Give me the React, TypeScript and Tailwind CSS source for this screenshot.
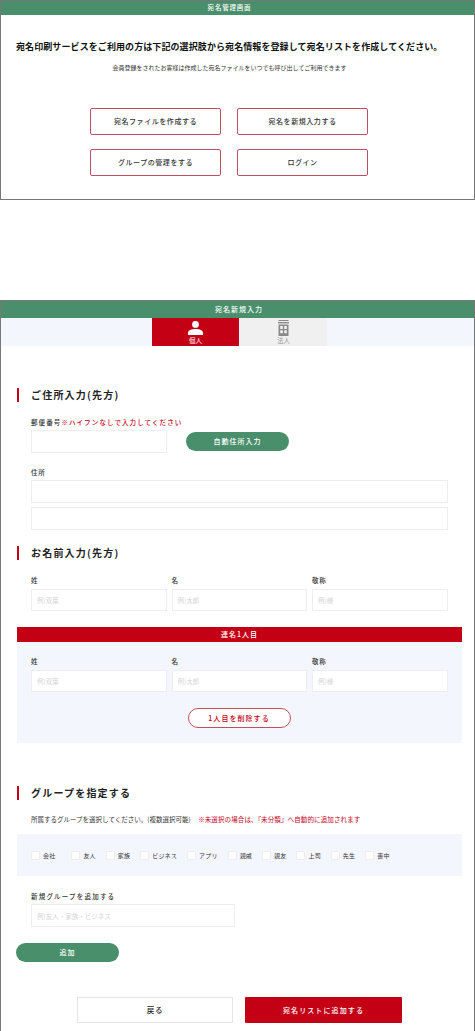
const font = "[font-family:'Noto_Sans_CJK_JP','Noto_Sans',sans-serif]"

function SectionTitle({ title, className }: { title: string; className: string }) {
  return (
    <div className={`flex h-[14px] items-center border-l-[2px] border-[#c4001a] pl-3 text-[10px] font-bold leading-none tracking-[0.12em] text-[#222] ${className}`}>
      {title}
    </div>
  )
}

function Field({ label, placeholder }: { label: string; placeholder: string }) {
  return (
    <div className="w-[135.5px]">
      <div className="text-[6.5px] font-medium leading-[9px] tracking-[0.8px] text-[#333]">{label}</div>
      <input
        placeholder={placeholder}
        className="mt-[4px] block h-[22px] w-full border border-[#eee] bg-white px-[5px] text-[6.5px] outline-none placeholder:text-[#d5d5d5]"
      />
    </div>
  )
}

function NameRow() {
  return (
    <div className="flex gap-[5px]">
      <Field label="姓" placeholder="例)双葉" />
      <Field label="名" placeholder="例)太郎" />
      <Field label="敬称" placeholder="例)様" />
    </div>
  )
}

function MenuButton({ label }: { label: string }) {
  return (
    <button className="flex h-[27px] w-[131px] items-center justify-center rounded-[2px] border border-[#c0505f] bg-white text-[7px] font-medium tracking-[0.08em] text-[#333]">
      {label}
    </button>
  )
}

const groups = ['会社', '友人', '家族', 'ビジネス', 'アプリ', '親戚', '親友', '上司', '先生', '喪中']

export default function App() {
  return (
    <div className={`${font} w-[475px] bg-white`}>
      {/* 宛名管理画面 */}
      <div className="h-[200px] border border-[#777]">
        <div className="flex h-[14px] items-center justify-center bg-[#4a8f6b] pr-[16px] text-[6.5px] font-medium tracking-[0.8px] text-white">
          宛名管理画面
        </div>
        <div className="mt-[25px] whitespace-nowrap pl-[15px] text-[9px] font-bold leading-[13px] tracking-[0.01em] text-[#111]">
          宛名印刷サービスをご利用の方は下記の選択肢から宛名情報を登録して宛名リストを作成してください。
        </div>
        <div className="mt-[10px] pr-[16px] text-center text-[6px] leading-[9px] text-[#333]">
          会員登録をされたお客様は作成した宛名ファイルをいつでも呼び出してご利用できます
        </div>
        <div className="ml-[89px] mt-[36px] grid w-[278px] grid-cols-[131px_131px] gap-x-[16px] gap-y-[14px]">
          <MenuButton label="宛名ファイルを作成する" />
          <MenuButton label="宛名を新規入力する" />
          <MenuButton label="グループの管理をする" />
          <MenuButton label="ログイン" />
        </div>
      </div>

      {/* 宛名新規入力 */}
      <div className="mt-[100px] h-[731px] border-x border-t border-[#777]">
        <div className="flex h-[17px] items-center justify-center bg-[#4a8f6b] pl-[3px] text-[7px] font-medium tracking-[1px] text-white">
          宛名新規入力
        </div>
        <div className="flex h-[28px] justify-center gap-px bg-[#f3f6fc] pl-[4px]">
          <div className="flex w-[87px] flex-col items-center bg-[#c40015] pt-[3px] text-white">
            <svg viewBox="0 0 15 14" className="h-[14px] w-[15px]" fill="currentColor">
              <circle cx="7.5" cy="3.4" r="3.4" />
              <path d="M0 14v-2.2C0 9.4 3.4 8 7.5 8s7.5 1.4 7.5 3.8V14z" />
            </svg>
            <span className="mt-[2px] text-[6.5px] leading-[7px]">個人</span>
          </div>
          <div className="flex w-[87px] flex-col items-center bg-[#f0f0f0] pt-[2px] text-[#8a8a8a]">
            <svg viewBox="0 0 11 16" className="h-[16px] w-[11px]" fill="currentColor">
              <rect x="0.5" y="0" width="10" height="1" />
              <rect x="0" y="2" width="11" height="1.4" />
              <path d="M0.5 4.4h10V16h-10zM2.2 6v3h2.6V6zm4 0v3h2.6V6zM2.2 10.2v3h2.6v-3zm4 0v3h2.6v-3z" />
            </svg>
            <span className="mt-[1px] text-[6.5px] leading-[7px] text-[#999]">法人</span>
          </div>
        </div>

        <div className="pl-[16px] pr-[12px]">
          <SectionTitle title="ご住所入力(先方)" className="mt-[42px]" />
          <div className="pl-[14px]">
            <div className="mt-[16px] text-[6.5px] font-medium leading-[9px] tracking-[1.1px] text-[#333]">
              郵便番号<span className="text-[#c4001a]">※ハイフンなしで入力してください</span>
            </div>
            <div className="mt-[3px] flex items-center gap-[19.5px]">
              <input className="h-[22.5px] w-[135.5px] border border-[#eee] bg-white" />
              <button className="h-[19px] w-[103px] rounded-full bg-[#4a8f6b] text-[7px] font-medium tracking-[1px] text-white">
                自動住所入力
              </button>
            </div>
            <div className="mt-[15.5px] text-[6.5px] font-medium leading-[9px] tracking-[0.8px] text-[#333]">住所</div>
            <input className="mt-[3px] block h-[22.5px] w-[416.5px] border border-[#eee] bg-white" />
            <input className="mt-[4.5px] block h-[22.5px] w-[416.5px] border border-[#eee] bg-white" />
          </div>

          <SectionTitle title="お名前入力(先方)" className="mt-[16.5px]" />
          <div className="mt-[16px] pl-[14px]">
            <NameRow />
          </div>

          <div className="mt-[16px] w-[445px] bg-[#f3f6fc]">
            <div className="flex h-[15px] items-center justify-center bg-[#c40015] text-[7px] font-medium tracking-[1px] text-white">
              連名1人目
            </div>
            <div className="px-[14px] pt-[15px]">
              <NameRow />
            </div>
            <div className="flex h-[51px] justify-center pt-[16px] pr-[1px]">
              <button className="h-[20px] w-[103px] rounded-full border border-[#c0505f] bg-white text-[7px] font-medium tracking-[0.15em] text-[#c4001a]">
                1人目を削除する
              </button>
            </div>
          </div>

          <SectionTitle title="グループを指定する" className="mt-[43px]" />
          <div className="mt-[15px] flex gap-[7.5px] whitespace-nowrap pl-[14px] text-[6.5px] leading-[9px]">
            <span className="text-[#333]">所属するグループを選択してください。(複数選択可能)</span>
            <span className="tracking-[0.12px] text-[#c4001a]">※未選択の場合は、『未分類』へ自動的に追加されます</span>
          </div>
          <div className="mt-[10px] flex h-[42px] w-[445px] items-center gap-[10px] bg-[#f3f6fc] pl-[14px]">
            {groups.map((g, i) => (
              <div key={g} className={`flex items-center gap-[3px] ${i === 0 ? 'mr-[6px]' : ''}`}>
                <span className="h-[9px] w-[9px] rounded-[1px] border border-[#eee] bg-white" />
                <span className="text-[6px] leading-[9px] tracking-[0.2px] text-[#333]">{g}</span>
              </div>
            ))}
          </div>
          <div className="pl-[14px]">
            <div className="mt-[16px] text-[6.5px] font-medium leading-[9px] tracking-[1.2px] text-[#333]">新規グループを追加する</div>
            <input
              placeholder="例)友人・家族・ビジネス"
              className="mt-[3px] block h-[23px] w-[204px] border border-[#eee] bg-white px-[5px] text-[6.5px] outline-none placeholder:text-[#d5d5d5]"
            />
          </div>
          <button className="-ml-[1px] mt-[16px] block h-[19px] w-[103px] rounded-full bg-[#4a8f6b] text-[7px] font-medium tracking-[1px] text-white">
            追加
          </button>
          <div className="ml-[60px] mt-[35px] flex gap-[12px]">
            <button className="h-[26px] w-[156px] border border-[#e5e5e5] bg-white text-[7.5px] font-medium tracking-[0.7px] text-[#222]">
              戻る
            </button>
            <button className="h-[26px] w-[157px] rounded-[1px] bg-[#c40015] text-[7px] font-medium tracking-[0.16em] text-white">
              宛名リストに追加する
            </button>
          </div>
        </div>
      </div>
    </div>
  )
}
